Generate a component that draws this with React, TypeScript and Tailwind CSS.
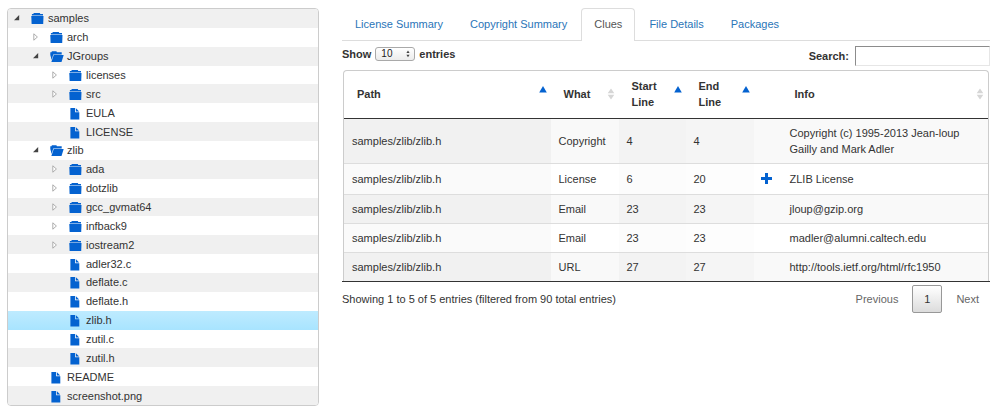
import React from "react";

type Kind = "folder" | "open" | "file";
type Node = { name: string; depth: number; kind: Kind; selected?: boolean };

const nodes: Node[] = [
  { name: "samples", depth: 0, kind: "folder" },
  { name: "arch", depth: 1, kind: "folder" },
  { name: "JGroups", depth: 1, kind: "open" },
  { name: "licenses", depth: 2, kind: "folder" },
  { name: "src", depth: 2, kind: "folder" },
  { name: "EULA", depth: 2, kind: "file" },
  { name: "LICENSE", depth: 2, kind: "file" },
  { name: "zlib", depth: 1, kind: "open" },
  { name: "ada", depth: 2, kind: "folder" },
  { name: "dotzlib", depth: 2, kind: "folder" },
  { name: "gcc_gvmat64", depth: 2, kind: "folder" },
  { name: "infback9", depth: 2, kind: "folder" },
  { name: "iostream2", depth: 2, kind: "folder" },
  { name: "adler32.c", depth: 2, kind: "file" },
  { name: "deflate.c", depth: 2, kind: "file" },
  { name: "deflate.h", depth: 2, kind: "file" },
  { name: "zlib.h", depth: 2, kind: "file", selected: true },
  { name: "zutil.c", depth: 2, kind: "file" },
  { name: "zutil.h", depth: 2, kind: "file" },
  { name: "README", depth: 1, kind: "file" },
  { name: "screenshot.png", depth: 1, kind: "file" },
];

const indents = ["pl-[5px]", "pl-6", "pl-[43px]"];

const clues = [
  { what: "Copyright", start: 4, end: 4, info: "Copyright (c) 1995-2013 Jean-loup Gailly and Mark Adler" },
  { what: "License", start: 6, end: 20, info: "ZLIB License", more: true },
  { what: "Email", start: 23, end: 23, info: "jloup@gzip.org" },
  { what: "Email", start: 23, end: 23, info: "madler@alumni.caltech.edu" },
  { what: "URL", start: 27, end: 27, info: "http://tools.ietf.org/html/rfc1950" },
];

function NodeIcon({ kind }: { kind: Kind }) {
  return (
    <svg viewBox="0 0 14 12" className="h-3 w-3.5 shrink-0 fill-[#0462d0]" aria-hidden="true">
      {kind === "folder" && (
        <>
          <path d="M2.8 0h6l0.5 1H12v1.1H0.9V1h1.4z" />
          <path d="M0.9 2.1H12v1H0.9z" opacity="0.5" />
          <path d="M0.3 3.1h12.2l-0.3 7.9H0.6z" />
        </>
      )}
      {kind === "open" && (
        <>
          <path d="M0.3 1.3h1.2l0.4-1h4.5l0.5 1h4.8v2.1H3.2L1.7 9 0.3 4z" />
          <path d="M3.7 4.1h10L11.5 11H1.4z" />
        </>
      )}
      {kind === "file" && (
        <>
          <path d="M1.4 0h4.7v4.3h4.2V11.4H1.4z" />
          <path d="M6.9 0.3l3.3 3.2H6.9z" />
        </>
      )}
    </svg>
  );
}

function TreeRow({ node, index, expanded }: { node: Node; index: number; expanded: boolean }) {
  const tone = node.selected
    ? "bg-linear-to-b from-[#beebff] to-[#a8e4ff]"
    : index % 2 === 0
      ? "bg-[#f0f0f0]"
      : "bg-white";
  return (
    <li className={`flex items-center ${indents[node.depth]} ${tone}`}>
      {node.kind === "file" ? (
        <span className="w-[18px] shrink-0" />
      ) : (
        <button type="button" aria-label={`Toggle ${node.name}`} className="flex w-[18px] shrink-0 items-center">
          <svg viewBox="0 0 8 8" className="size-2" aria-hidden="true">
            {expanded ? (
              <path d="M6.2 1v5.2H1z" fill="#444" />
            ) : (
              <path d="M1.8 0.8v6.4L5.4 4z" fill="#fff" stroke="#a5a5a5" strokeWidth="0.9" />
            )}
          </svg>
        </button>
      )}
      <span className="flex pt-0.5">
        <NodeIcon kind={node.kind} />
      </span>
      <span className="pl-[3px] leading-4">{node.name}</span>
    </li>
  );
}

const tabs = ["License Summary", "Copyright Summary", "Clues", "File Details", "Packages"];

function SortIcon({ active }: { active?: boolean }) {
  return (
    <svg viewBox="0 0 8 12" className="h-3 w-2 shrink-0" aria-hidden="true">
      {active ? (
        <path d="M4 0L7.8 6.5H0.2z" fill="#0462d0" />
      ) : (
        <path d="M4 0.4L7.3 5.2H0.7zM4 11.6L7.3 6.8H0.7z" fill="#d6d6d6" />
      )}
    </svg>
  );
}

function Heading({ label, active }: { label: string; active?: boolean }) {
  return (
    <th scope="col" className="p-0 text-left font-bold">
      <button type="button" className="flex w-full items-center justify-between pr-1 pl-[13px] text-left">
        <span>{label}</span>
        <span className={active ? "flex pb-1" : "flex"}>
          <SortIcon active={active} />
        </span>
      </button>
    </th>
  );
}

export default function App() {
  return (
    <div className="grid min-h-screen grid-cols-[13fr_27fr] gap-[23px] bg-white py-2 pr-2.5 pl-[7px] font-['Liberation_Sans',Arial,sans-serif] text-[11px] leading-4 text-[#333]">
      <ul className="grid auto-rows-fr overflow-hidden rounded border border-[#ccc]">
        {nodes.map((node, i) => (
          <TreeRow key={node.name} node={node} index={i} expanded={node.kind === "open" || node.depth === 0} />
        ))}
      </ul>

      <main className="min-w-0">
        <nav className="flex gap-px border-b border-[#ddd]">
          {tabs.map((tab) => (
            <a
              key={tab}
              href="#"
              className={
                tab === "Clues"
                  ? "-mb-px rounded-t border border-b-0 border-[#ddd] bg-white px-3 pt-[7px] pb-[9px] text-[#555]"
                  : "border border-b-0 border-transparent px-3 pt-[7px] pb-2 text-[#2a75b8]"
              }
            >
              {tab}
            </a>
          ))}
        </nav>

        <div className="flex items-start justify-between pt-[5px] font-bold">
          <label className="flex items-center gap-1">
            Show
            <span className="relative flex">
              <select className="h-3.5 w-10 appearance-none rounded-[3px] border border-[#a9a9a9] bg-linear-to-b from-white to-[#ececec] pl-[5px] text-[10px] leading-3 font-normal text-[#222]">
                <option>10</option>
                <option>25</option>
                <option>50</option>
              </select>
              <svg viewBox="0 0 4 8" className="pointer-events-none absolute top-[3px] right-[5px] h-2 w-1" aria-hidden="true">
                <path d="M2 0.6L3.6 3H0.4zM2 7.2L3.6 4.8H0.4z" fill="#444" />
              </svg>
            </span>
            entries
          </label>
          <label className="flex items-center gap-1.5">
            Search:
            <input
              type="search"
              className="h-5 w-[135px] border border-t-[#8c8c8c] border-r-[#e6e6e6] border-b-[#e6e6e6] border-l-[#8c8c8c] bg-white px-1 font-normal outline-none"
            />
          </label>
        </div>

        <div className="mt-1 border-b border-[#333] px-px">
          <div className="rounded-t border border-b-0 border-[#ccc]">
            <table className="w-full table-fixed border-collapse">
              <colgroup>
                <col />
                <col className="w-[68px]" />
                <col className="w-[67px]" />
                <col className="w-[68px]" />
                <col className="w-7" />
                <col />
              </colgroup>
              <thead>
                <tr className="h-[47px] border-b border-[#333]">
                  <Heading label="Path" active />
                  <Heading label="What" />
                  <Heading label="Start Line" active />
                  <Heading label="End Line" active />
                  <th aria-label="Details" className="p-0" />
                  <Heading label="Info" />
                </tr>
              </thead>
              <tbody>
                {clues.map((clue, i) => {
                  const odd = i % 2 === 0;
                  return (
                    <tr
                      key={clue.what + i}
                      className={`border-t first:border-t-0 border-[#ddd] ${odd ? "bg-[#f9f9f9]" : "bg-white"}`}
                    >
                      <td className={`px-2 py-1.5 ${odd ? "bg-[#f1f1f1]" : "bg-[#fafafa]"}`}>samples/zlib/zlib.h</td>
                      <td className="px-2 py-1.5">{clue.what}</td>
                      <td className={`px-2 py-1.5 ${odd ? "bg-[#f3f3f3]" : "bg-[#fcfcfc]"}`}>{clue.start}</td>
                      <td className={`px-2 py-1.5 ${odd ? "bg-[#f5f5f5]" : "bg-[#fdfdfd]"}`}>{clue.end}</td>
                      <td className="p-0">
                        {clue.more && (
                          <button type="button" aria-label="Show license details" className="flex h-[30px] items-center pl-[7px]">
                            <svg viewBox="0 0 11 11" className="size-[11px]" aria-hidden="true">
                              <path d="M4 0h3v4h4v3H7v4H4V7H0V4h4z" fill="#0462d0" />
                            </svg>
                          </button>
                        )}
                      </td>
                      <td className="px-2 py-1.5">{clue.info}</td>
                    </tr>
                  );
                })}
              </tbody>
            </table>
          </div>
        </div>

        <div className="flex items-center justify-between pt-[3px]">
          <p>Showing 1 to 5 of 5 entries (filtered from 90 total entries)</p>
          <div className="flex items-center pr-[11px] text-[#666]">
            <button type="button" className="pr-3.5">Previous</button>
            <button
              type="button"
              aria-current="page"
              className="h-7 w-[30px] rounded-[2px] border border-[#989898] bg-linear-to-b from-white to-[#dcdcdc] text-[#333]"
            >
              1
            </button>
            <button type="button" className="pl-3.5">Next</button>
          </div>
        </div>
      </main>
    </div>
  );
}
